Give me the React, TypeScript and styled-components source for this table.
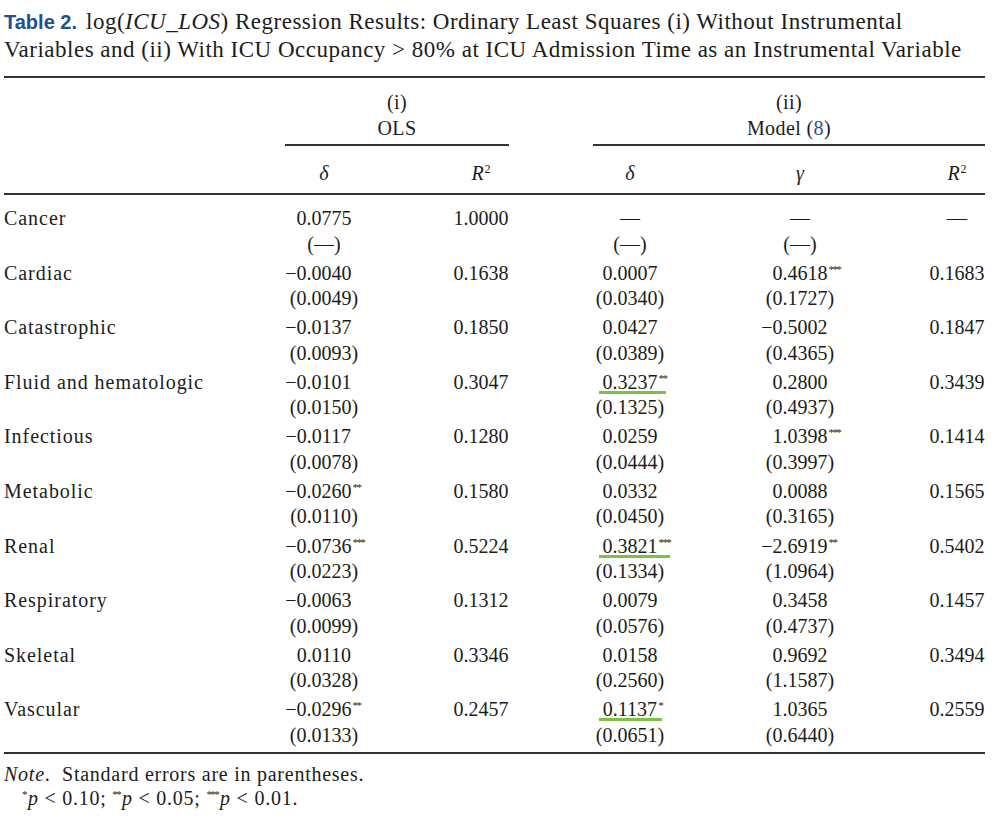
import React from 'react';
import styled, { createGlobalStyle } from 'styled-components';

const GlobalStyle = createGlobalStyle`
  body {
    margin: 0;
    background: #ffffff;
    color: #1c1c1c;
    font-family: 'Liberation Serif', 'Times New Roman', serif;
  }
`;

const COLS = '258px 124px 190px 108px 232px 82px';

const Page = styled.div`
  padding: 8px 0 0 4px;
  width: 994px;
`;

const Caption = styled.div`
  font-size: 23px;
  line-height: 27px;
  letter-spacing: 0.5px;
  white-space: nowrap;
`;

const CaptionLabel = styled.span`
  font-family: 'Liberation Sans', Arial, sans-serif;
  font-weight: bold;
  font-size: 20px;
  letter-spacing: 0;
  color: #21508f;
  margin-right: 9px;
`;

const Rule = styled.div<{ $top?: number }>`
  height: 2px;
  background: #333333;
  margin-right: 13px;
  margin-top: ${({ $top }) => $top ?? 0}px;
`;

const HeadRow = styled.div`
  display: grid;
  grid-template-columns: ${COLS};
`;

const GroupHead = styled.div<{ $col: string; $ml: number; $mr: number }>`
  grid-column: ${({ $col }) => $col};
  margin: 0 ${({ $mr }) => $mr}px 0 ${({ $ml }) => $ml}px;
  padding: 11px 0 3px;
  border-bottom: 2px solid #333333;
  text-align: center;
  font-size: 20px;
  line-height: 26px;
  letter-spacing: 0.4px;
`;

const LinkRef = styled.span`
  color: #2b4f8e;
`;

const ColHead = styled.div`
  padding: 14px 0 7px;
  text-align: center;
  font-size: 20px;
  line-height: 26px;
  font-style: italic;
`;

const Sup = styled.sup`
  font-style: normal;
  font-size: 12px;
  vertical-align: 7px;
  line-height: 0;
  margin-left: 1px;
`;

const Body = styled.div`
  padding-top: 11px;
`;

const DataRow = styled.div`
  display: grid;
  grid-template-columns: ${COLS};
  padding-bottom: 3.6px;
  font-size: 20px;
`;

const Label = styled.div`
  line-height: 25.5px;
  letter-spacing: 0.95px;
`;

const Cell = styled.div`
  display: flex;
  flex-direction: column;
  align-items: center;
`;

const Line = styled.div`
  height: 25.5px;
  line-height: 25.5px;
`;

const Digits = styled.span<{ $hl?: boolean; $ext: number }>`
  position: relative;
  display: inline-block;

  ${({ $hl, $ext }) =>
    $hl &&
    `
    &::after {
      content: '';
      position: absolute;
      left: -4px;
      right: -${$ext}px;
      top: 21px;
      height: 3px;
      background: #7cc242;
    }
  `}
`;

const Pre = styled.span`
  position: absolute;
  right: 100%;
  top: 0;
`;

const Post = styled.span`
  position: absolute;
  left: 100%;
  top: 0;
`;

const Stars = styled.span`
  position: absolute;
  left: 100%;
  top: -4px;
  font-size: 11px;
  letter-spacing: -1.6px;
  padding-left: 1px;
`;

const NoteBlock = styled.div`
  margin-top: 8px;
  font-size: 20px;
  line-height: 24px;
  letter-spacing: 0.75px;
`;

const NoteLine = styled.div<{ $indent?: number }>`
  padding-left: ${({ $indent }) => $indent ?? 0}px;
`;

const FootStar = styled.sup`
  font-size: 11px;
  vertical-align: 7px;
  line-height: 0;
  letter-spacing: -1.6px;
  margin-right: 2px;
`;

type Est = { v: string; s?: number; se?: string; hl?: boolean };

type Row = {
  label: string;
  cells: Est[];
};

const rows: Row[] = [
  {
    label: 'Cancer',
    cells: [
      { v: '0.0775', se: '—' },
      { v: '1.0000' },
      { v: '—', se: '—' },
      { v: '—', se: '—' },
      { v: '—' },
    ],
  },
  {
    label: 'Cardiac',
    cells: [
      { v: '−0.0040', se: '0.0049' },
      { v: '0.1638' },
      { v: '0.0007', se: '0.0340' },
      { v: '0.4618', s: 3, se: '0.1727' },
      { v: '0.1683' },
    ],
  },
  {
    label: 'Catastrophic',
    cells: [
      { v: '−0.0137', se: '0.0093' },
      { v: '0.1850' },
      { v: '0.0427', se: '0.0389' },
      { v: '−0.5002', se: '0.4365' },
      { v: '0.1847' },
    ],
  },
  {
    label: 'Fluid and hematologic',
    cells: [
      { v: '−0.0101', se: '0.0150' },
      { v: '0.3047' },
      { v: '0.3237', s: 2, se: '0.1325', hl: true },
      { v: '0.2800', se: '0.4937' },
      { v: '0.3439' },
    ],
  },
  {
    label: 'Infectious',
    cells: [
      { v: '−0.0117', se: '0.0078' },
      { v: '0.1280' },
      { v: '0.0259', se: '0.0444' },
      { v: '1.0398', s: 3, se: '0.3997' },
      { v: '0.1414' },
    ],
  },
  {
    label: 'Metabolic',
    cells: [
      { v: '−0.0260', s: 2, se: '0.0110' },
      { v: '0.1580' },
      { v: '0.0332', se: '0.0450' },
      { v: '0.0088', se: '0.3165' },
      { v: '0.1565' },
    ],
  },
  {
    label: 'Renal',
    cells: [
      { v: '−0.0736', s: 3, se: '0.0223' },
      { v: '0.5224' },
      { v: '0.3821', s: 3, se: '0.1334', hl: true },
      { v: '−2.6919', s: 2, se: '1.0964' },
      { v: '0.5402' },
    ],
  },
  {
    label: 'Respiratory',
    cells: [
      { v: '−0.0063', se: '0.0099' },
      { v: '0.1312' },
      { v: '0.0079', se: '0.0576' },
      { v: '0.3458', se: '0.4737' },
      { v: '0.1457' },
    ],
  },
  {
    label: 'Skeletal',
    cells: [
      { v: '0.0110', se: '0.0328' },
      { v: '0.3346' },
      { v: '0.0158', se: '0.2560' },
      { v: '0.9692', se: '1.1587' },
      { v: '0.3494' },
    ],
  },
  {
    label: 'Vascular',
    cells: [
      { v: '−0.0296', s: 2, se: '0.0133' },
      { v: '0.2457' },
      { v: '0.1137', s: 1, se: '0.0651', hl: true },
      { v: '1.0365', se: '0.6440' },
      { v: '0.2559' },
    ],
  },
];

function Value({ est }: { est: Est }) {
  const neg = est.v.startsWith('−');
  const digits = neg ? est.v.slice(1) : est.v;
  const stars = est.s ?? 0;
  return (
    <Line>
      <Digits $hl={est.hl} $ext={stars ? stars * 3.8 + 1 : 1}>
        {neg && <Pre>−</Pre>}
        {digits}
        {stars > 0 && <Stars>{'*'.repeat(stars)}</Stars>}
      </Digits>
    </Line>
  );
}

function StdErr({ se }: { se?: string }) {
  if (!se) return <Line />;
  return (
    <Line>
      <Digits $ext={0}>
        <Pre>(</Pre>
        {se}
        <Post>)</Post>
      </Digits>
    </Line>
  );
}

function R2() {
  return (
    <>
      R<Sup>2</Sup>
    </>
  );
}

export default function App() {
  return (
    <Page>
      <GlobalStyle />
      <Caption>
        <CaptionLabel>Table 2.</CaptionLabel>
        log(<i>ICU_LOS</i>) Regression Results: Ordinary Least Squares (i) Without Instrumental
        <br />
        Variables and (ii) With ICU Occupancy &gt; 80% at ICU Admission Time as an Instrumental
        Variable
      </Caption>

      <Rule $top={13} />

      <HeadRow>
        <GroupHead $col="2 / 4" $ml={23} $mr={67}>
          (i)
          <br />
          OLS
        </GroupHead>
        <GroupHead $col="4 / 7" $ml={17} $mr={13}>
          (ii)
          <br />
          Model (<LinkRef>8</LinkRef>)
        </GroupHead>
      </HeadRow>

      <HeadRow>
        <ColHead />
        <ColHead>δ</ColHead>
        <ColHead>
          <R2 />
        </ColHead>
        <ColHead>δ</ColHead>
        <ColHead>γ</ColHead>
        <ColHead>
          <R2 />
        </ColHead>
      </HeadRow>

      <Rule />

      <Body>
        {rows.map((row) => (
          <DataRow key={row.label}>
            <Label>{row.label}</Label>
            {row.cells.map((est, i) => (
              <Cell key={i}>
                <Value est={est} />
                <StdErr se={est.se} />
              </Cell>
            ))}
          </DataRow>
        ))}
      </Body>

      <Rule />

      <NoteBlock>
        <NoteLine>
          <i>Note</i>.&nbsp; Standard errors are in parentheses.
        </NoteLine>
        <NoteLine $indent={18}>
          <FootStar>*</FootStar>
          <i>p</i> &lt; 0.10; <FootStar>**</FootStar>
          <i>p</i> &lt; 0.05; <FootStar>***</FootStar>
          <i>p</i> &lt; 0.01.
        </NoteLine>
      </NoteBlock>
    </Page>
  );
}
